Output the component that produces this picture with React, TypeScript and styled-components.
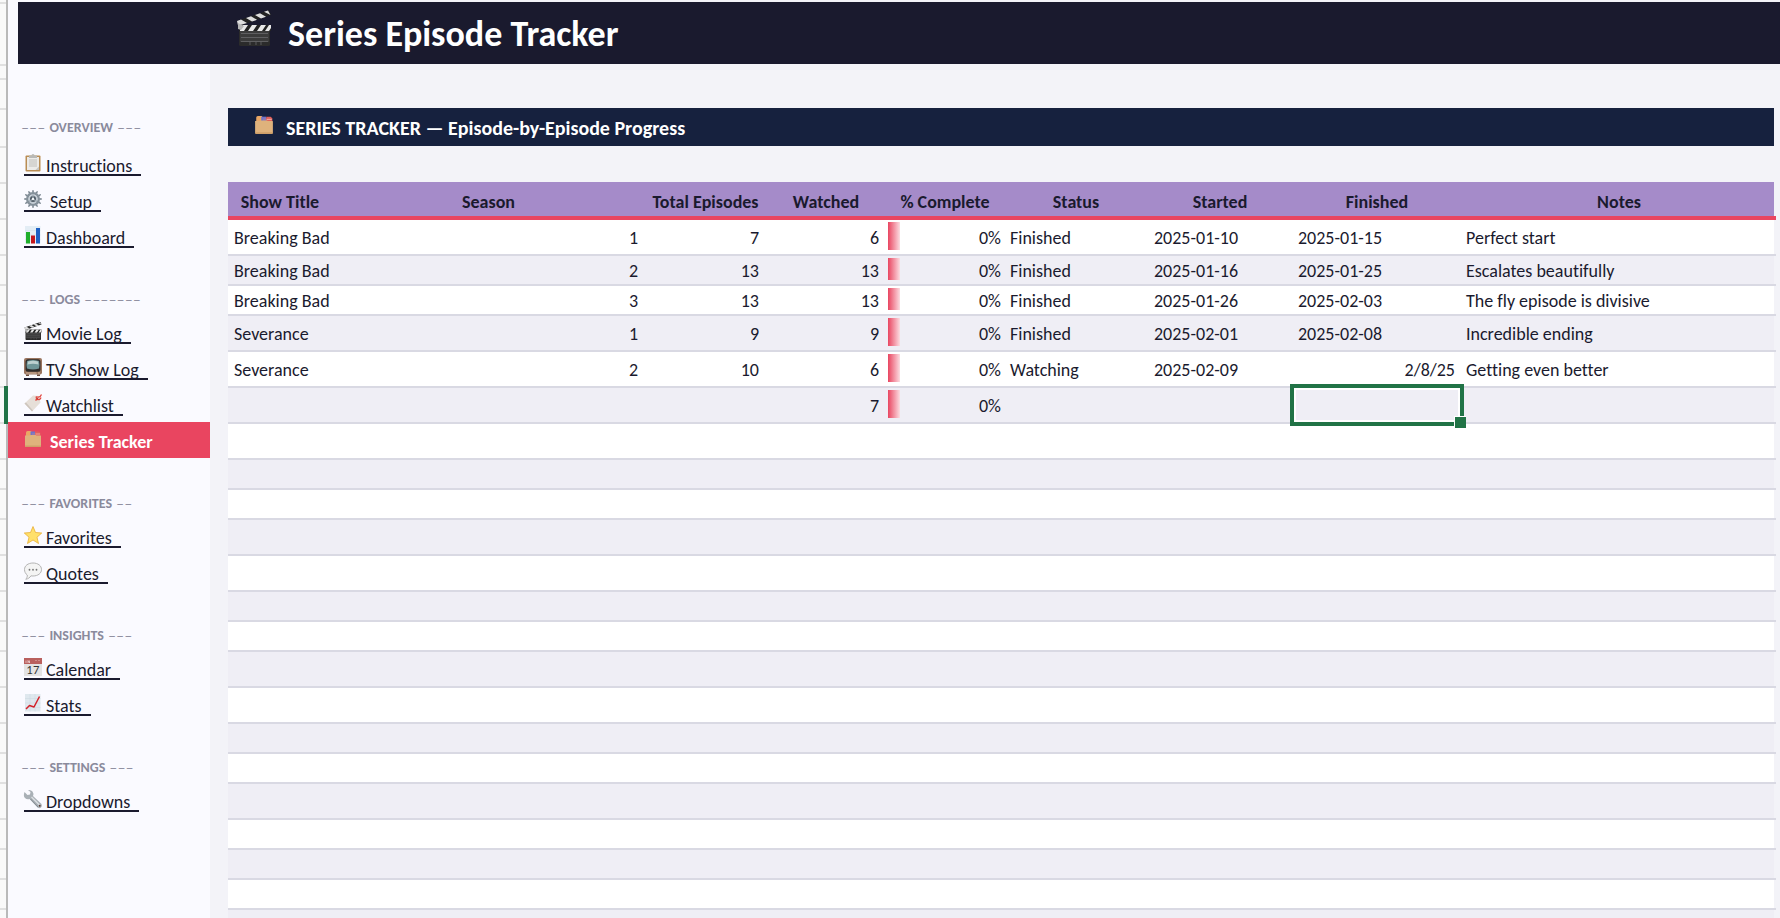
import React from 'react';
import styled, { createGlobalStyle, css } from 'styled-components';

const color = {
  page: '#f3f3f8',
  side: '#fafaff',
  ink: '#1a1a2e',
  navy: '#16213e',
  accent: '#e94560',
  purple: '#a58bc9',
  line: '#d9d9e3',
  band: '#efeef5',
  muted: '#8a8a9c',
  select: '#217346',
};

const GlobalStyle = createGlobalStyle`
  * { box-sizing: border-box; }
  body {
    margin: 0;
    background: ${color.page};
    color: ${color.ink};
    font-family: Carlito, Calibri, Lato, sans-serif;
    font-size: 18px;
    line-height: 22px;
    font-variant-ligatures: none;
  }
`;

/* ---------- layout ---------- */

const Sheet = styled.div`
  display: flex;
  height: 100vh;
  overflow: hidden;
`;

const Gutter = styled.div`
  flex: none;
  width: 8px;
  background: #f9f9f9;
  border-right: 2px solid #b9b9b9;
`;

const GutterRow = styled.div<{ $h: number; $active?: boolean }>`
  height: ${(p) => p.$h}px;
  border-bottom: 2px solid #e0e0e0;
  ${(p) =>
    p.$active &&
    css`
      position: relative;
      &::after {
        content: '';
        position: absolute;
        top: -2px;
        bottom: -2px;
        right: -2px;
        width: 4px;
        background: ${color.select};
      }
    `}
`;

const Content = styled.div`
  flex: 1;
  min-width: 0;
  padding-top: 2px;
  background: linear-gradient(to right, ${color.side} 202px, ${color.page} 202px);
`;

const Banner = styled.header`
  display: flex;
  align-items: center;
  height: 62px;
  margin-left: 10px;
  padding-left: 218px;
  background: ${color.ink};
  color: #fff;
`;

const Title = styled.h1`
  display: flex;
  align-items: baseline;
  gap: 16px;
  margin: 0;
  font-size: 36px;
  line-height: 44px;
`;

const Columns = styled.div`
  display: flex;
`;

const Sidebar = styled.nav`
  flex: none;
  width: 202px;
  padding-top: 44px;
`;

const NavGroup = styled.section`
  margin-bottom: 30px;
`;

const NavLabel = styled.h2<{ $tall?: boolean }>`
  display: flex;
  align-items: center;
  gap: 4px;
  height: ${(p) => (p.$tall ? 38 : 30)}px;
  margin: 0;
  padding-left: 13px;
  color: ${color.muted};
  font-size: 14px;
  line-height: 17px;
`;

const Dashes = styled.span`
  font-family: Lato, sans-serif;
  font-weight: 400;
`;

const NavItem = styled.div<{ $active?: boolean }>`
  display: flex;
  align-items: flex-end;
  height: 36px;
  padding: 0 0 6px 16px;
  background: ${(p) => (p.$active ? color.accent : 'transparent')};
`;

const NavLink = styled.a<{ $active?: boolean; $wide?: boolean }>`
  display: flex;
  align-items: baseline;
  gap: ${(p) => (p.$wide ? 8 : 4)}px;
  height: 22px;
  padding-right: 9px;
  border-bottom: 2px solid ${(p) => (p.$active ? 'transparent' : color.ink)};
  color: ${(p) => (p.$active ? '#fff' : color.ink)};
  font-weight: ${(p) => (p.$active ? 700 : 400)};
  text-decoration: none;
  white-space: nowrap;
`;

const Main = styled.main`
  flex: 1;
  min-width: 0;
  padding: 44px 4px 0 18px;
`;

const SectionBar = styled.div`
  display: flex;
  align-items: center;
  height: 38px;
  margin: 0 2px 36px 0;
  padding-left: 26px;
  background: ${color.navy};
  color: #fff;
`;

const SectionTitle = styled.h2`
  display: flex;
  align-items: baseline;
  gap: 12px;
  margin: 0;
  font-size: 20px;
  line-height: 24px;
`;

/* ---------- table ---------- */

const Grid = styled.table`
  width: 100%;
  table-layout: fixed;
  border-collapse: separate;
  border-spacing: 0;
`;

const Col = styled.col<{ $w?: number }>`
  width: ${(p) => (p.$w ? `${p.$w}px` : 'auto')};
`;

const HeadCell = styled.th`
  height: 38px;
  padding: 5px 0 0;
  border-bottom: 4px solid ${color.accent};
  background: ${color.purple};
  white-space: nowrap;
  &:last-child {
    box-shadow: inset -2px 0 ${color.page};
  }
`;

const Row = styled.tr<{ $h: number }>`
  height: ${(p) => p.$h}px;
  background: #fff;
  &:nth-child(even) {
    background: ${color.band};
  }
`;

const Cell = styled.td<{ $num?: boolean }>`
  padding: 1px 7px 0 6px;
  border-bottom: 2px solid ${color.line};
  text-align: ${(p) => (p.$num ? 'right' : 'left')};
  white-space: nowrap;
  &:last-child {
    padding-left: 4px;
    box-shadow: inset -2px 0 ${color.page};
  }
`;

const PercentCell = styled(Cell)<{ $bar: boolean }>`
  padding-right: 3px;
  ${(p) =>
    p.$bar &&
    css`
      background: linear-gradient(to right, ${color.accent}, #fcdde2) no-repeat 2px 2px / 12px
        calc(100% - 6px);
    `}
`;

const DateCell = styled(Cell)`
  position: relative;
`;

const Selection = styled.span`
  position: absolute;
  z-index: 1;
  inset: -4px -2px;
  border: 4px solid ${color.select};
  box-shadow: inset 0 0 0 2px #fff;
  &::after {
    content: '';
    position: absolute;
    right: -6px;
    bottom: -6px;
    width: 11px;
    height: 11px;
    border: solid #fff;
    border-width: 1px 0 0 1px;
    background: ${color.select};
  }
`;

/* ---------- icons ---------- */

const Svg = styled.svg<{ $size: number }>`
  flex: none;
  display: block;
  width: ${(p) => p.$size}px;
  height: ${(p) => p.$size}px;
  overflow: visible;
`;

type IconName =
  | 'clapper' | 'dividers' | 'clipboard' | 'gear' | 'bars' | 'tv' | 'tag'
  | 'star' | 'bubble' | 'calendar' | 'trend' | 'wrench';

const teeth = Array.from({ length: 12 }, (_, i) => i * 30);

const drawings: Record<IconName, React.ReactNode> = {
  clapper: (
    <>
      <rect x="3" y="16" width="31" height="20" rx="1.5" fill="#2b2b2b" />
      <rect x="4" y="21" width="29" height="11" fill="#3b3b3b" />
      <path d="M5 23.5H32M5 27.5H32M5 31.5H32M14 32V35M20 32V35M25 32V35" stroke="#68686b" strokeWidth=".8" />
      <rect x="3" y="15" width="32" height="6" fill="#222" />
      <path d="M7 15h5l-4 6H4v-1zM16 15h5l-4 6h-5zM25 15h5l-4 6h-5zM33 15h2v3l-2 3h-4z" fill="#e8e8e8" />
      <path d="M1 11 33 0l2 5L3 16z" fill="#222" />
      <path d="M1 11l4-1.500 6 3.500-5 1.600-4 1zM10 8l5-1.800 6 3.600-5 1.800zM19 5l5-1.700 6 3.500-5 1.700zM28 1.800l4-1.300 2.500 4.500z" fill="#dedede" />
      <path d="M2 13l6 3-3 4-3-1z" fill="#b5b5b5" />
    </>
  ),
  dividers: (
    <>
      <path d="M4 13V5q0-3 3-3h7l2 3v8z" fill="#e9a765" />
      <path d="M13 3h9v10h-9z" fill="#6f73c9" />
      <path d="M16 6h12v7H16z" fill="#8d79b5" />
      <path d="M22 3h8l3 3v7H22z" fill="#e0605a" />
      <path d="M23 7h9v2h-9z" fill="#f0a39b" />
      <path d="M2 11h9l2-1h10l2 1h8q1 0 1 1v20q0 2-2 2H4q-2 0-2-2z" fill="#dfb27c" />
      <path d="M2 31q0 3 2 3h28q2 0 2-3z" fill="#cf9f68" />
    </>
  ),
  clipboard: (
    <>
      <rect x="3" y="3" width="30" height="32" rx="2" fill="#b98d55" />
      <rect x="6" y="6" width="24" height="26" fill="#ecebe9" />
      <rect x="10" y="10" width="16" height="16" fill="#d6d5d2" />
      <path d="M30 25v7h-7z" fill="#c7c5c2" />
      <path d="M10 3h5q0-3 3-3t3 3h5v5H10z" fill="#b9b9b6" />
    </>
  ),
  gear: (
    <>
      {teeth.map((a) => (
        <path key={a} d="M16 5l1-5h2l1 5z" fill="#77838d" transform={`rotate(${a} 18 18)`} />
      ))}
      <circle cx="18" cy="18" r="11.500" fill="none" stroke="#84909a" strokeWidth="5" />
      <circle cx="18" cy="18" r="9" fill="#c3ccd4" />
      <circle cx="18" cy="18" r="6" fill="#4d5964" />
      <path d="M18 18V9M18 18l8 5M18 18l-8 5" stroke="#9aa5ae" strokeWidth="2.500" />
      <circle cx="18" cy="18" r="2.500" fill="#eef2f5" />
    </>
  ),
  bars: (
    <>
      <rect x="2" y="0" width="31" height="35" fill="#e3edf5" />
      <path d="M2 9H33M2 18H33M2 27H33" stroke="#cfdde8" />
      <rect x="4" y="12" width="8" height="23" fill="#1fae2b" />
      <rect x="14" y="19" width="8" height="16" fill="#c4161c" />
      <rect x="24" y="4" width="8" height="31" fill="#1d5fc4" />
    </>
  ),
  tv: (
    <>
      <rect x="0" y="0" width="36" height="33" rx="4" fill="#9a7560" />
      <path d="M4 33h6v3H4zM26 33h6v3h-6z" fill="#6a4a3a" />
      <rect x="3" y="2.500" width="30" height="25" rx="5" fill="#2f2c2c" />
      <path d="M6 6q12-4 24 0 2 8 0 15-12 4-24 0-2-7 0-15z" fill="#6f9699" />
      <path d="M8 7q10-3 20 0l1 6q-11-3-22 0z" fill="#bcd0d0" />
      <path d="M4 30H25" stroke="#d3b79f" strokeWidth="2" />
      <circle cx="30" cy="30" r="1.500" fill="#e6cdb5" />
    </>
  ),
  tag: (
    <>
      <path d="M1 19 18 3l12 1 3 13-17 18z" fill="#e6dfd8" />
      <path d="M1 19l15 16 2-2L4 17z" fill="#cdc5bd" />
      <circle cx="26" cy="10" r="2.500" fill="#a33" />
      <path d="M26 10q-4-6 1-4t8-5M26 10q6 3 8-3M26 10l-3 3" fill="none" stroke="#e2463f" strokeWidth="2.500" />
    </>
  ),
  star: (
    <path
      d="M18 1l5 12 12.500 1-9.500 8.500L29 35l-11-7L7 35l3-12.500L.5 14 13 13z"
      fill="#ffe06a"
      stroke="#e7a92c"
      strokeWidth="1.500"
      strokeLinejoin="round"
    />
  ),
  bubble: (
    <>
      <path
        d="M18 2c10 0 17 5.500 17 13s-7 13-17 13c-1.500 0-3 0-4-.5C12 31 8 34 3.500 34.500 6 32 7 29 6.500 26 3 23.500 1 19.500 1 15 1 7.500 8 2 18 2z"
        fill="#f4f4f4"
        stroke="#b4b4b4"
        strokeWidth="2"
      />
      <circle cx="11" cy="15.500" r="1.800" fill="#777" />
      <circle cx="18" cy="15.500" r="1.800" fill="#777" />
      <circle cx="25" cy="15.500" r="1.800" fill="#777" />
    </>
  ),
  calendar: (
    <>
      <rect x="0" y="0" width="36" height="36" fill="#e3e3e3" />
      <rect x="0" y="0" width="36" height="12" fill="#b9605e" />
      <path d="M4 10V5M8 10V5l3 5V5M24 4v2M30 4v2" stroke="#f0d6d4" strokeWidth="1.500" fill="none" />
      <text x="18" y="31" textAnchor="middle" fontFamily="Lato, sans-serif" fontSize="22" fontWeight="400" fill="#333">
        17
      </text>
    </>
  ),
  trend: (
    <>
      <rect x="2" y="0" width="31" height="35" fill="#dfe8ee" />
      <path d="M2 9H33M2 18H33M2 27H33M12 0V35M22 0V35" stroke="#cbd8e0" />
      <path d="M4 30l7-7 9 3L31 5" fill="none" stroke="#d3222a" strokeWidth="3" strokeLinejoin="round" />
    </>
  ),
  wrench: (
    <>
      <path
        d="M1 4l6 6 5-1 1-5-5-4q6-1 9 3t1 9l17 16q2 4-1 7t-7 0L11 18q-5 2-9-2T1 4z"
        fill="#a9b0b6"
      />
      <path d="M15 14l16 16" stroke="#dde1e4" strokeWidth="2.500" />
      <path d="M13 18l15 16" stroke="#777d83" strokeWidth="1.500" />
      <circle cx="31.500" cy="31.500" r="1.800" fill="#5b4038" />
    </>
  ),
};

const Icon = ({ name, size = 18 }: { name: IconName; size?: number }) => (
  <Svg viewBox="0 0 36 36" $size={size} aria-hidden="true">
    {drawings[name]}
  </Svg>
);

/* ---------- data ---------- */

type Item = { label: string; icon: IconName; active?: boolean; wide?: boolean };
type Group = { label: string; tail: number; tall?: boolean; items: Item[] };

const groups: Group[] = [
  {
    label: 'OVERVIEW', tail: 3, tall: true,
    items: [
      { label: 'Instructions', icon: 'clipboard' },
      { label: 'Setup', icon: 'gear', wide: true },
      { label: 'Dashboard', icon: 'bars' },
    ],
  },
  {
    label: 'LOGS', tail: 7,
    items: [
      { label: 'Movie Log', icon: 'clapper' },
      { label: 'TV Show Log', icon: 'tv' },
      { label: 'Watchlist', icon: 'tag' },
      { label: 'Series Tracker', icon: 'dividers', active: true, wide: true },
    ],
  },
  {
    label: 'FAVORITES', tail: 2,
    items: [
      { label: 'Favorites', icon: 'star' },
      { label: 'Quotes', icon: 'bubble' },
    ],
  },
  {
    label: 'INSIGHTS', tail: 3,
    items: [
      { label: 'Calendar', icon: 'calendar' },
      { label: 'Stats', icon: 'trend' },
    ],
  },
  { label: 'SETTINGS', tail: 3, items: [{ label: 'Dropdowns', icon: 'wrench' }] },
];

const columns: { label: string; w?: number }[] = [
  { label: 'Show Title', w: 104 },
  { label: 'Season', w: 313 },
  { label: 'Total Episodes', w: 121 },
  { label: 'Watched', w: 120 },
  { label: '% Complete', w: 118 },
  { label: 'Status', w: 144 },
  { label: 'Started', w: 144 },
  { label: 'Finished', w: 170 },
  { label: 'Notes' },
];

type Entry = {
  title?: string; season?: string; total?: string; watched?: string; percent?: string;
  status?: string; started?: string; finished?: string; finishedRight?: boolean;
  notes?: string; selected?: boolean;
};

const entries: Entry[] = [
  { title: 'Breaking Bad', season: '1', total: '7', watched: '6', percent: '0%', status: 'Finished', started: '2025-01-10', finished: '2025-01-15', notes: 'Perfect start' },
  { title: 'Breaking Bad', season: '2', total: '13', watched: '13', percent: '0%', status: 'Finished', started: '2025-01-16', finished: '2025-01-25', notes: 'Escalates beautifully' },
  { title: 'Breaking Bad', season: '3', total: '13', watched: '13', percent: '0%', status: 'Finished', started: '2025-01-26', finished: '2025-02-03', notes: 'The fly episode is divisive' },
  { title: 'Severance', season: '1', total: '9', watched: '9', percent: '0%', status: 'Finished', started: '2025-02-01', finished: '2025-02-08', notes: 'Incredible ending' },
  { title: 'Severance', season: '2', total: '10', watched: '6', percent: '0%', status: 'Watching', started: '2025-02-09', finished: '2/8/25', finishedRight: true, notes: 'Getting even better' },
  { watched: '7', percent: '0%', selected: true },
];

const rowHeights = [
  36, 30, 30, 36, 36, 36, 36, 30, 30, 36, 36, 30, 30, 36, 36, 30, 30, 36, 30, 30, 30, 30,
];
const gutterHeights = [4, 62, 14, 30, 38, 36, 36, ...rowHeights];
const activeGutterRow = 7 + entries.findIndex((e) => e.selected);

export default function App() {
  return (
    <>
      <GlobalStyle />
      <Sheet>
        <Gutter>
          {gutterHeights.map((h, i) => (
            <GutterRow key={i} $h={h} $active={i === activeGutterRow} />
          ))}
        </Gutter>
        <Content>
          <Banner>
            <Title>
              <Icon name="clapper" size={36} />
              Series Episode Tracker
            </Title>
          </Banner>
          <Columns>
            <Sidebar>
              {groups.map((g) => (
                <NavGroup key={g.label}>
                  <NavLabel $tall={g.tall}>
                    <Dashes>{'–'.repeat(3)}</Dashes>
                    {g.label}
                    <Dashes>{'–'.repeat(g.tail)}</Dashes>
                  </NavLabel>
                  {g.items.map((it) => (
                    <NavItem key={it.label} $active={it.active}>
                      <NavLink
                        href="#"
                        $active={it.active}
                        $wide={it.wide}
                        aria-current={it.active ? 'page' : undefined}
                      >
                        <Icon name={it.icon} />
                        {it.label}
                      </NavLink>
                    </NavItem>
                  ))}
                </NavGroup>
              ))}
            </Sidebar>
            <Main>
              <SectionBar>
                <SectionTitle>
                  <Icon name="dividers" size={20} />
                  SERIES TRACKER — Episode-by-Episode Progress
                </SectionTitle>
              </SectionBar>
              <Grid>
                <colgroup>
                  {columns.map((c) => (
                    <Col key={c.label} $w={c.w} />
                  ))}
                </colgroup>
                <thead>
                  <tr>
                    {columns.map((c) => (
                      <HeadCell key={c.label} scope="col">{c.label}</HeadCell>
                    ))}
                  </tr>
                </thead>
                <tbody>
                  {rowHeights.map((h, i) => {
                    const e = entries[i] ?? {};
                    return (
                      <Row key={i} $h={h}>
                        <Cell>{e.title}</Cell>
                        <Cell $num>{e.season}</Cell>
                        <Cell $num>{e.total}</Cell>
                        <Cell $num>{e.watched}</Cell>
                        <PercentCell $num $bar={Boolean(e.percent)}>{e.percent}</PercentCell>
                        <Cell>{e.status}</Cell>
                        <Cell>{e.started}</Cell>
                        <DateCell $num={e.finishedRight}>
                          {e.finished}
                          {e.selected && <Selection />}
                        </DateCell>
                        <Cell>{e.notes}</Cell>
                      </Row>
                    );
                  })}
                </tbody>
              </Grid>
            </Main>
          </Columns>
        </Content>
      </Sheet>
    </>
  );
}
